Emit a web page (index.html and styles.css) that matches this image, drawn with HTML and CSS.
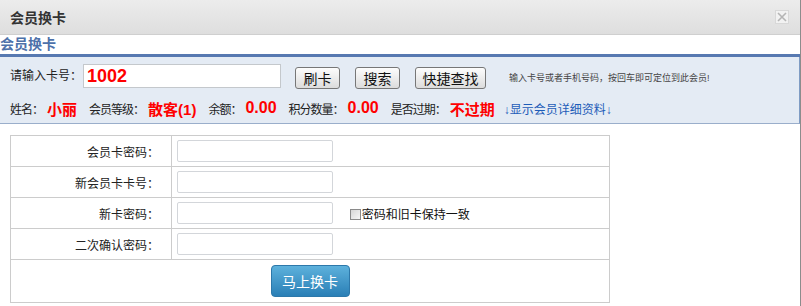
FILE: index.html
```html
<!DOCTYPE html>
<html>
<head>
    <meta charset="utf-8">
    <link rel="stylesheet" href="styles.css">
</head>
<body>
    <div class="dialog">
        <div class="dialog-head">
            <span class="dialog-title">会员换卡</span>
            <span class="dialog-close">
                <svg width="12" height="12" viewBox="0 0 12 12">
                    <path d="M2 2 L10 10 M10 2 L2 10" stroke="#b5b5b5" stroke-width="1.6" fill="none"/>
                </svg>
            </span>
        </div>

        <div class="page-title">会员换卡</div>

        <div class="search-panel">
            <div class="search-row">
                <label class="search-label">请输入卡号：</label>
                <input class="card-input" type="text" value="1002">
                <button class="btn btn-first">刷卡</button>
                <button class="btn">搜索</button>
                <button class="btn btn-wide">快捷查找</button>
                <span class="hint">输入卡号或者手机号码，按回车即可定位到此会员!</span>
            </div>
            <div class="info-row">
                <span class="info-label">姓名：</span><span class="info-val">小丽</span>
                <span class="info-label">会员等级：</span><span class="info-val">散客(1)</span>
                <span class="info-label">余额：</span><span class="info-val num">0.00</span>
                <span class="info-label">积分数量：</span><span class="info-val num">0.00</span>
                <span class="info-label">是否过期：</span><span class="info-val">不过期</span>
                <a class="detail-link" href="#">↓显示会员详细资料↓</a>
            </div>
        </div>

        <table class="form-table">
            <tr>
                <td class="cell-label">会员卡密码：</td>
                <td><input class="field" type="password"></td>
            </tr>
            <tr>
                <td class="cell-label">新会员卡卡号：</td>
                <td><input class="field" type="text"></td>
            </tr>
            <tr>
                <td class="cell-label">新卡密码：</td>
                <td>
                    <input class="field" type="password">
                    <span class="same-check"><span class="check-box"></span>密码和旧卡保持一致</span>
                </td>
            </tr>
            <tr>
                <td class="cell-label">二次确认密码：</td>
                <td><input class="field" type="password"></td>
            </tr>
            <tr class="submit-row">
                <td colspan="2"><button class="btn-submit">马上换卡</button></td>
            </tr>
        </table>
    </div>
</body>
</html>
```

FILE: styles.css
```css
html,
body {
    margin: 0;
    padding: 0;
    background: #fff;
    font-family: "Liberation Sans", "Noto Sans CJK SC", sans-serif;
    font-size: 12px;
    color: #222;
}

.dialog {
    width: 800px;
    height: 306px;
    border-right: 1px solid #8c8c8c;
}

.dialog-head {
    height: 34px;
    border-bottom: 1px solid #cfcfcf;
    background: linear-gradient(#ececec, #dedede);
    display: flex;
    align-items: center;
    justify-content: space-between;
    padding: 0 10px;
}
.dialog-title {
    font-size: 14px;
    font-weight: bold;
    color: #333;
}
.dialog-close {
    width: 12px;
    height: 12px;
    border: 1px solid #d8d8d8;
    background: #f2f2f2;
    display: flex;
    margin-right: 1px;
}

.page-title {
    height: 19px;
    line-height: 18px;
    font-size: 14px;
    font-weight: bold;
    color: #4d71aa;
    border-bottom: 3px solid #5779b1;
}

.search-panel {
    height: 59px;
    padding: 7px 0 0 10px;
    background: #e4ebf4;
    border-bottom: 1px solid #9aaecb;
    border-right: 1px solid #7f9cc4;
}

.search-row {
    height: 24px;
    display: flex;
    align-items: flex-start;
}
.search-label {
    line-height: 24px;
    width: 73px;
}
.card-input {
    box-sizing: border-box;
    width: 198px;
    height: 24px;
    margin: 0;
    padding: 0 3px;
    border: 1px solid #c4c8cc;
    background: #fff;
    font-family: "Liberation Sans", sans-serif;
    font-size: 18px;
    font-weight: bold;
    color: #f00;
}
.btn {
    box-sizing: border-box;
    width: 45px;
    height: 22px;
    margin: 3px 0 0 15px;
    padding: 0;
    border: 1px solid #777;
    border-radius: 3px;
    background: linear-gradient(#fdfdfd, #dcdcdc);
    font-family: "Noto Sans CJK SC", sans-serif;
    font-size: 14px;
    line-height: 18px;
    color: #111;
}
.btn-first {
    margin-left: 14px;
}
.btn-wide {
    width: 71px;
}
.hint {
    margin: 7px 0 0 23px;
    font-size: 9px;
    color: #444;
}

.info-row {
    margin-top: 10px;
    height: 20px;
    display: flex;
    align-items: center;
    white-space: nowrap;
}
.info-label {
    font-family: "Noto Sans CJK SC", sans-serif;
    font-size: 12px;
    letter-spacing: -1px;
    color: #222;
}
.info-val {
    font-family: "Liberation Sans", "Noto Sans CJK SC", sans-serif;
    font-size: 15px;
    font-weight: bold;
    color: #f00;
    margin: 0 12px 0 4px;
}
.info-val.num {
    font-size: 16px;
}
.detail-link {
    margin-left: -3px;
    font-family: "Liberation Sans", "Noto Sans CJK SC", sans-serif;
    font-size: 12px;
    color: #1d5cb8;
    text-decoration: none;
}

.form-table {
    margin: 11px 0 0 10px;
    width: 600px;
    border-collapse: collapse;
    border: 1px solid #ccc;
}
.form-table td {
    border: 1px solid #ccc;
    height: 30px;
    padding: 0 0 0 5px;
    font-family: "Noto Sans CJK SC", sans-serif;
    font-size: 12px;
}
.form-table td.cell-label {
    width: 148px;
    padding: 0 12px 0 0;
    text-align: right;
    color: #222;
}
.field {
    box-sizing: border-box;
    width: 156px;
    height: 22px;
    margin: 0;
    vertical-align: middle;
    border: 1px solid #d3d6da;
    border-radius: 2px;
    background: #fff;
}
.same-check {
    margin-left: 14px;
    vertical-align: middle;
    font-size: 12px;
    color: #111;
}
.check-box {
    display: inline-block;
    box-sizing: border-box;
    width: 11px;
    height: 11px;
    margin-right: 1px;
    vertical-align: -1px;
    border: 1px solid #8a8a8a;
    background: linear-gradient(135deg, #d6d6d6, #f6f6f6);
}

.submit-row td {
    height: 42px;
    padding: 0;
    text-align: center;
}
.btn-submit {
    width: 79px;
    height: 32px;
    border: 1px solid #2d78aa;
    border-radius: 4px;
    background: linear-gradient(#5db1dc, #2a7fb6);
    color: #fff;
    font-family: "Noto Sans CJK SC", sans-serif;
    font-size: 14px;
    letter-spacing: 0;
}
```
